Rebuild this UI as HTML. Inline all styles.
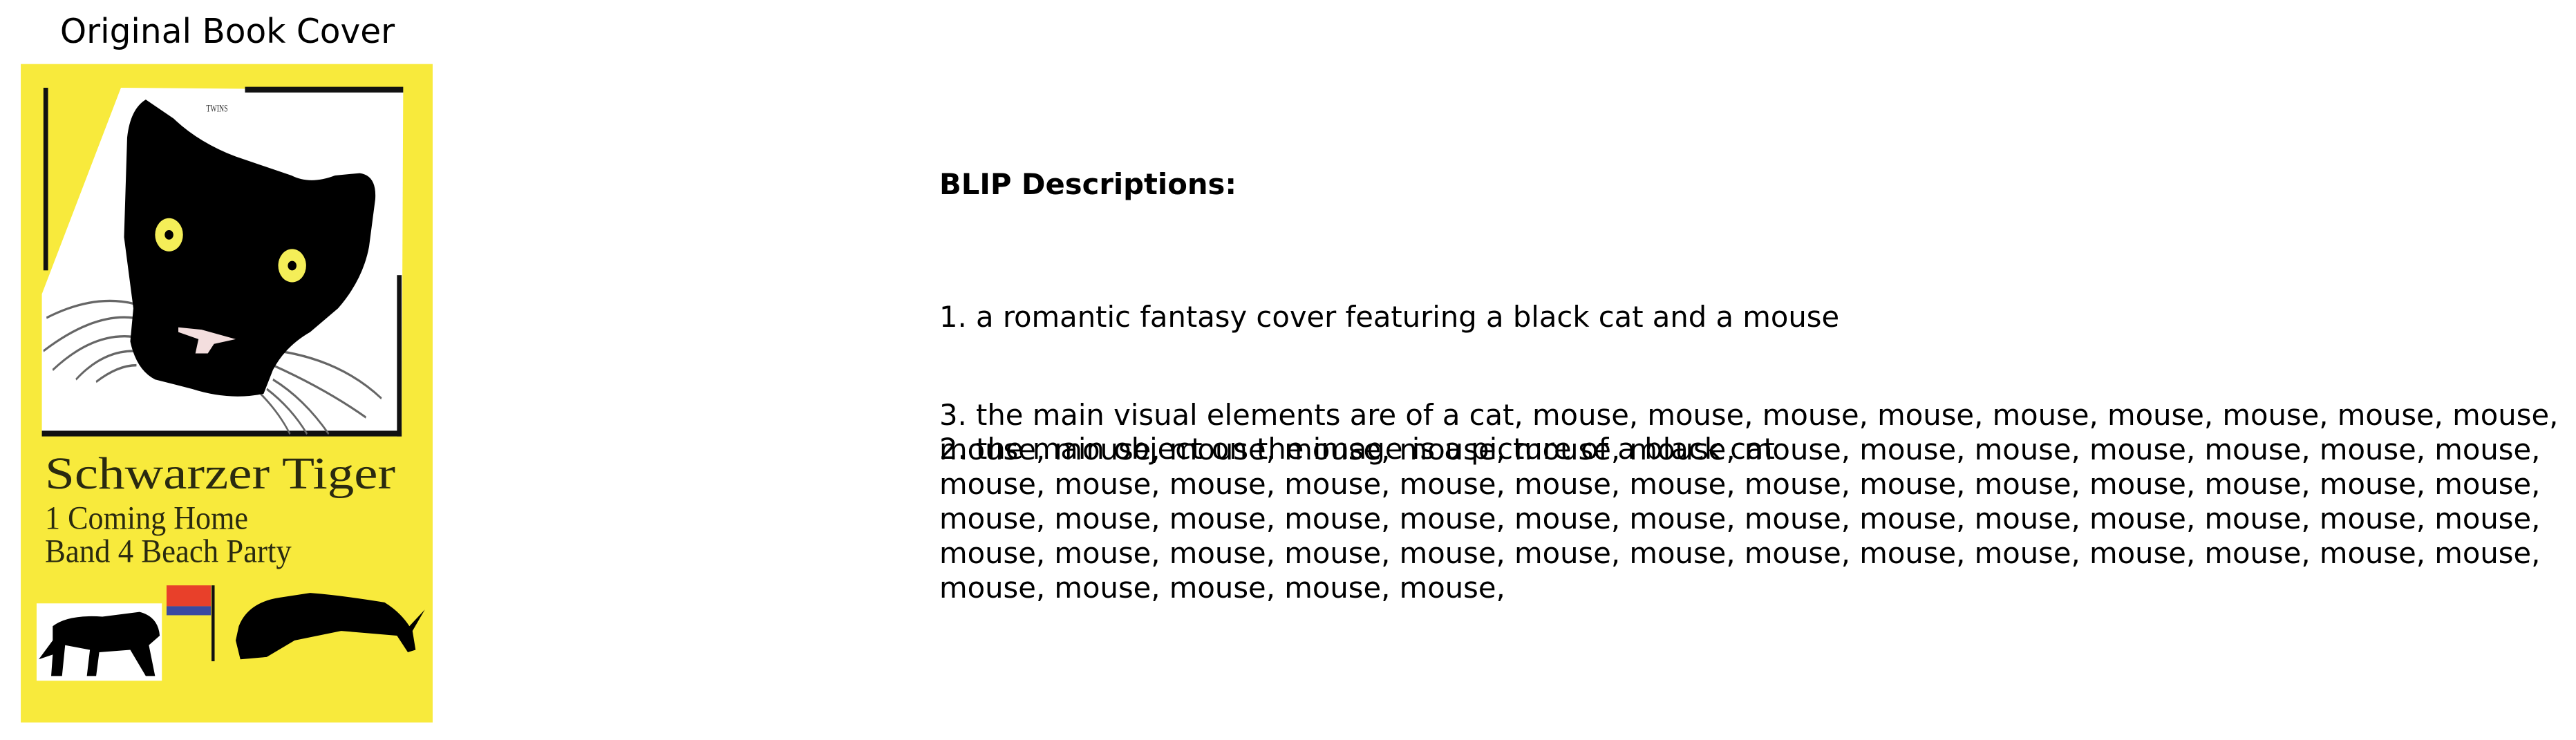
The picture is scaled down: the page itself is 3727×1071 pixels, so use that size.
<!DOCTYPE html>
<html><head><meta charset="utf-8"><style>
html,body{margin:0;padding:0;background:#fff;width:3727px;height:1071px;overflow:hidden;position:relative}
.t{position:absolute;font-family:"DejaVu Sans","Liberation Sans",sans-serif;font-size:41.7px;line-height:50px;color:#000;white-space:nowrap}
</style></head><body>
<div class="t" style="left:0;width:658px;text-align:center;top:17px;font-size:48.6px;line-height:58px">Original Book Cover</div>
<svg style="position:absolute;left:0;top:0" width="700" height="1071" viewBox="0 0 1560 1560" preserveAspectRatio="none">
<rect x="67" y="135" width="1328" height="1388" fill="#f8ea3c"/>
<polygon points="390,185 1300,190 1295,920 135,915 135,620" fill="#fff"/>
<rect x="140" y="185" width="15" height="385" fill="#111"/>
<rect x="790" y="183" width="510" height="12" fill="#111"/>
<rect x="1280" y="580" width="15" height="340" fill="#111"/>
<rect x="135" y="908" width="1160" height="12" fill="#111"/>
<text x="665" y="235" font-family="Liberation Serif" font-size="22" fill="#333">TWINS</text>
<g stroke="#666" stroke-width="5" fill="none">
<path d="M150,670 Q300,620 430,640"/><path d="M140,740 Q300,660 430,670"/><path d="M170,780 Q300,700 430,710"/><path d="M245,800 Q330,740 430,740"/><path d="M310,805 Q380,770 440,770"/>
<path d="M900,740 Q1100,760 1230,840"/><path d="M880,770 Q1050,820 1180,880"/><path d="M880,800 Q980,840 1060,915"/><path d="M860,820 Q940,860 990,915"/><path d="M840,830 Q900,870 935,915"/>
</g>
<path d="M470,210 Q420,230 410,290 L400,500 Q420,600 430,650 L420,720 Q440,780 500,800 L620,820 Q740,845 850,830 L880,780 Q920,730 1000,700 L1090,650 Q1170,590 1190,520 L1210,420 Q1215,370 1160,365 L1080,370 Q1000,390 940,370 L760,330 Q640,300 560,250 Z" fill="#000"/>
<ellipse cx="545" cy="495" rx="45" ry="35" fill="#f4ee58"/><ellipse cx="545" cy="495" rx="14" ry="10" fill="#000"/>
<ellipse cx="942" cy="560" rx="45" ry="35" fill="#f4ee58"/><ellipse cx="942" cy="560" rx="14" ry="10" fill="#000"/>
<path d="M575,690 L650,695 L760,715 L690,725 L670,745 L630,745 L640,715 L575,700 Z" fill="#f3dede"/>
<text x="145" y="1030" font-family="Liberation Serif" font-size="95" textLength="1130" lengthAdjust="spacingAndGlyphs" fill="#2a2a10">Schwarzer Tiger</text>
<text x="145" y="1115" font-family="Liberation Serif" font-size="70" textLength="655" lengthAdjust="spacingAndGlyphs" fill="#2a2a10">1 Coming Home</text>
<text x="145" y="1185" font-family="Liberation Serif" font-size="70" textLength="795" lengthAdjust="spacingAndGlyphs" fill="#2a2a10">Band 4 Beach Party</text>
<rect x="118" y="1272" width="404" height="163" fill="#fff"/>
<path d="M170,1320 Q220,1295 330,1300 L450,1290 Q510,1300 515,1340 L480,1360 L500,1425 L470,1425 L420,1370 L320,1375 L310,1425 L280,1425 L290,1370 L210,1360 L200,1425 L165,1425 L170,1380 L125,1390 L170,1350 Z" fill="#000"/>
<rect x="537" y="1234" width="143" height="44" fill="#e8402a"/>
<rect x="537" y="1278" width="143" height="19" fill="#3a4aa0"/>
<rect x="682" y="1234" width="10" height="160" fill="#111"/>
<path d="M770,1320 Q800,1270 900,1260 L1000,1250 Q1100,1255 1240,1270 Q1290,1290 1320,1320 L1370,1285 L1330,1330 L1340,1370 L1315,1375 L1280,1340 L1100,1330 L950,1350 L860,1385 L775,1390 L760,1350 Z" fill="#000"/>
</svg>
<div class="t" style="left:1359px;top:242px;font-weight:bold">BLIP Descriptions:</div>
<div class="t" style="left:1359px;top:434px">1. a romantic fantasy cover featuring a black cat and a mouse</div>
<div class="t" style="left:1359px;top:576px">3. the main visual elements are of a cat, mouse, mouse, mouse, mouse, mouse, mouse, mouse, mouse, mouse,<br>mouse, mouse, mouse, mouse, mouse, mouse, mouse, mouse, mouse, mouse, mouse, mouse, mouse, mouse,<br>mouse, mouse, mouse, mouse, mouse, mouse, mouse, mouse, mouse, mouse, mouse, mouse, mouse, mouse,<br>mouse, mouse, mouse, mouse, mouse, mouse, mouse, mouse, mouse, mouse, mouse, mouse, mouse, mouse,<br>mouse, mouse, mouse, mouse, mouse, mouse, mouse, mouse, mouse, mouse, mouse, mouse, mouse, mouse,<br>mouse, mouse, mouse, mouse, mouse,</div>
<div class="t" style="left:1359px;top:625px">2. the main object on the image is a picture of a black cat</div>
</body></html>
